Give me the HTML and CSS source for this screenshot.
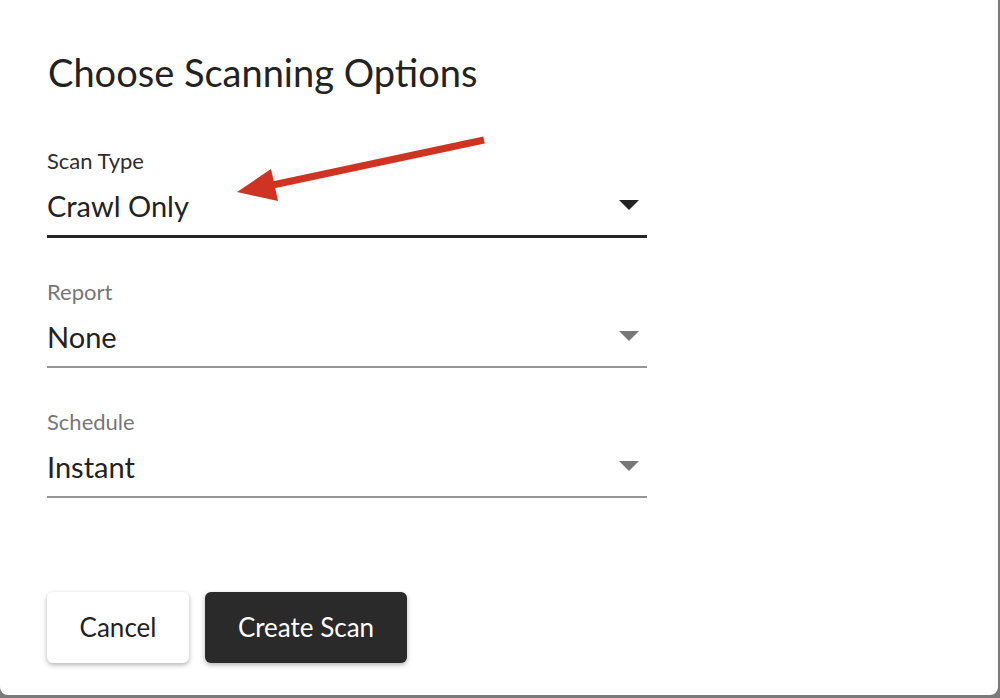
FILE: index.html
```html
<!DOCTYPE html>
<html lang="en">
<head>
  <meta charset="utf-8">
  <title>Choose Scanning Options</title>
  <link rel="stylesheet" href="styles.css">
</head>
<body>
  <div class="dialog">
    <h2 class="title">Choose Scanning Options</h2>

    <div class="field focused">
      <div class="label">Scan Type</div>
      <div class="select">
        <span class="value">Crawl Only</span>
        <span class="caret"></span>
      </div>
    </div>

    <div class="field">
      <div class="label">Report</div>
      <div class="select">
        <span class="value">None</span>
        <span class="caret"></span>
      </div>
    </div>

    <div class="field">
      <div class="label">Schedule</div>
      <div class="select">
        <span class="value">Instant</span>
        <span class="caret"></span>
      </div>
    </div>

    <div class="actions">
      <div class="btn btn-cancel">Cancel</div>
      <div class="btn btn-create">Create Scan</div>
    </div>

    <!-- annotation arrow -->
    <svg class="pointer" width="260" height="72" viewBox="0 0 260 72">
      <line x1="252" y1="6" x2="36" y2="52" stroke="#cf3322" stroke-width="7"/>
      <polygon points="5,58 39,35 46,67" fill="#cf3322"/>
    </svg>
  </div>
</body>
</html>
```

FILE: styles.css
```css
body {
  margin: 0;
  background: #7a7a7a;
  font-family: "Lato", "Noto Sans", sans-serif;
}

.dialog {
  position: relative;
  width: 950px;
  height: 695px;
  padding: 0 0 0 48px;
  background: #FFFFFF;
  border-radius: 0 0 8px 8px;
  overflow: hidden;
}

.title {
  margin: 0;
  padding-top: 50px;
  font-size: 38px;
  line-height: 44px;
  font-weight: normal;
  color: #222222;
}

.field {
  width: 600px;
  margin-left: -1px;
  margin-top: 41px;
  padding-bottom: 11px;
  border-bottom: 2px solid #959595;
}

.title + .field {
  margin-top: 54px;
}

.field.focused {
  border-bottom: 3px solid #252525;
}

.label {
  font-size: 22px;
  line-height: 26px;
  color: #777777;
}

.focused .label {
  color: #2e2e2e;
}

.select {
  display: flex;
  align-items: center;
  justify-content: space-between;
  margin-top: 14px;
  padding-right: 8px;
}

.value {
  font-size: 29px;
  line-height: 36px;
  color: #222222;
}

.caret {
  width: 0;
  height: 0;
  margin-top: -3px;
  border-left: 10px solid transparent;
  border-right: 10px solid transparent;
  border-top: 10px solid #777777;
}

.focused .caret {
  border-top-color: #222222;
}

.actions {
  display: flex;
  gap: 16px;
  margin-left: -1px;
  margin-top: 94px;
}

.btn {
  height: 71px;
  border-radius: 6px;
  font-size: 26px;
  line-height: 71px;
  text-align: center;
  box-shadow: 0px 2px 5px rgba(0, 0, 0, 0.3);
}

.btn-cancel {
  width: 142px;
  background: #FFFFFF;
  color: #222222;
}

.btn-create {
  width: 202px;
  background: #2a2a2a;
  color: #FFFFFF;
}

.pointer {
  position: absolute;
  left: 232px;
  top: 134px;
}
```
